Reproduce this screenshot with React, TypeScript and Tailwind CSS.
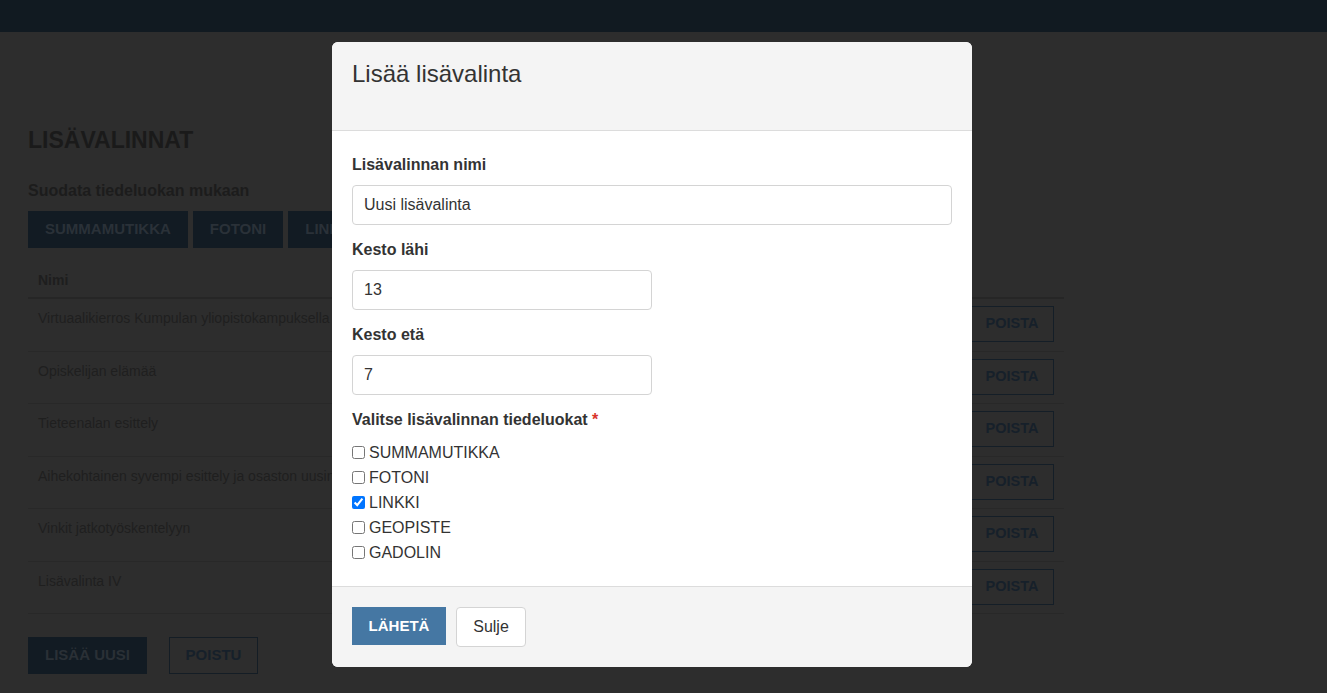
import React from "react"

const filters = ["SUMMAMUTIKKA", "FOTONI", "LINKKI", "GEOPISTE", "GADOLIN"]

const rows = [
  "Virtuaalikierros Kumpulan yliopistokampuksella",
  "Opiskelijan elämää",
  "Tieteenalan esittely",
  "Aihekohtainen syvempi esittely ja osaston uusin",
  "Vinkit jatkotyöskentelyyn",
  "Lisävalinta IV",
]

const categories = [
  { name: "SUMMAMUTIKKA", checked: false },
  { name: "FOTONI", checked: false },
  { name: "LINKKI", checked: true },
  { name: "GEOPISTE", checked: false },
  { name: "GADOLIN", checked: false },
]

const Field = ({ label, value, wide }: { label: string; value: string; wide?: boolean }) => (
  <div className="mb-[15px]">
    <label className="mb-[10px] block text-[16px] font-bold leading-[20px] text-[#333]">{label}</label>
    <input
      readOnly
      value={value}
      className={`h-[40px] rounded-[4px] border border-[#d4d4d4] bg-white px-[11px] text-[16px] text-[#333] outline-none ${
        wide ? "w-[600px]" : "w-[300px]"
      }`}
    />
  </div>
)

const AddModal = () => (
  <div className="absolute left-[332px] top-[42px] w-[640px] overflow-hidden rounded-[6px] bg-white">
    <div className="h-[89px] border-b border-[#dcdcdc] bg-[#f4f4f4] px-5 pt-[18px]">
      <h2 className="text-[24px] leading-[28px] text-[#333]">Lisää lisävalinta</h2>
    </div>

    <div className="px-5 pb-[21px] pt-[24px]">
      <Field label="Lisävalinnan nimi" value="Uusi lisävalinta" wide />
      <Field label="Kesto lähi" value="13" />
      <Field label="Kesto etä" value="7" />

      <div className="text-[16px] font-bold leading-[20px] text-[#333]">
        Valitse lisävalinnan tiedeluokat <span className="text-[#d9342b]">*</span>
      </div>
      <div className="mt-[10px] flex flex-col">
        {categories.map((c) => (
          <label key={c.name} className="flex h-[25px] items-center text-[16px] text-[#333]">
            <input type="checkbox" defaultChecked={c.checked} className="m-0 mr-[4px] h-[13px] w-[13px]" />
            {c.name}
          </label>
        ))}
      </div>
    </div>

    <div className="flex h-[81px] gap-[10px] border-t border-[#dcdcdc] bg-[#f4f4f4] px-5 pt-[20px]">
      <button className="flex h-[38px] w-[94px] items-center justify-center bg-[#4577a3] text-[15px] font-bold text-white">
        LÄHETÄ
      </button>
      <button className="flex h-[40px] w-[70px] items-center justify-center rounded-[4px] border border-[#d4d4d4] bg-white text-[16px] text-[#333]">
        Sulje
      </button>
    </div>
  </div>
)

export default function App() {
  return (
    <div className="relative h-[693px] w-full overflow-hidden bg-[#2d2d2d] font-['Liberation_Sans',Arial,sans-serif]">
      <div className="h-8 bg-[#111a21]" />

      <div className="px-7">
        <h1 className="mt-[95px] text-[23px] font-bold leading-[26px] text-[#1a1a1a]">LISÄVALINNAT</h1>
        <div className="mt-[28px] text-[16px] font-bold leading-[20px] text-[#1c1c1c]">Suodata tiedeluokan mukaan</div>

        <div className="mt-[10px] flex gap-[5px]">
          {filters.map((f) => (
            <button
              key={f}
              className="flex h-[37px] items-center bg-[#121b23] px-[17px] text-[15px] font-bold text-[#2a3138]"
            >
              {f}
            </button>
          ))}
        </div>

        <div className="mt-[12px] w-[1036px]">
          <div className="flex h-[39px] items-center border-b-2 border-[#262626] px-[10px] pt-[4px] text-[14px] font-bold text-[#1e1e1e]">
            Nimi
          </div>
          {rows.map((r) => (
            <div key={r} className="flex h-[52.5px] items-start justify-between border-b border-[#282828] px-[10px] pt-[7px]">
              <span className="pt-[2px] text-[14px] leading-[20px] text-[#1f1f1f]">{r}</span>
              <button className="flex h-[36px] w-[84px] items-center justify-center border border-[#141e27] text-[14.5px] font-bold text-[#16202a]">
                POISTA
              </button>
            </div>
          ))}
        </div>

        <div className="mt-[23px] flex gap-[22px]">
          <button className="flex h-[37px] w-[119px] items-center justify-center bg-[#121b23] text-[15px] font-bold text-[#2a3036]">
            LISÄÄ UUSI
          </button>
          <button className="flex h-[37px] w-[89px] items-center justify-center border border-[#141d25] text-[15px] font-bold text-[#16202a]">
            POISTU
          </button>
        </div>
      </div>

      <AddModal />
    </div>
  )
}
